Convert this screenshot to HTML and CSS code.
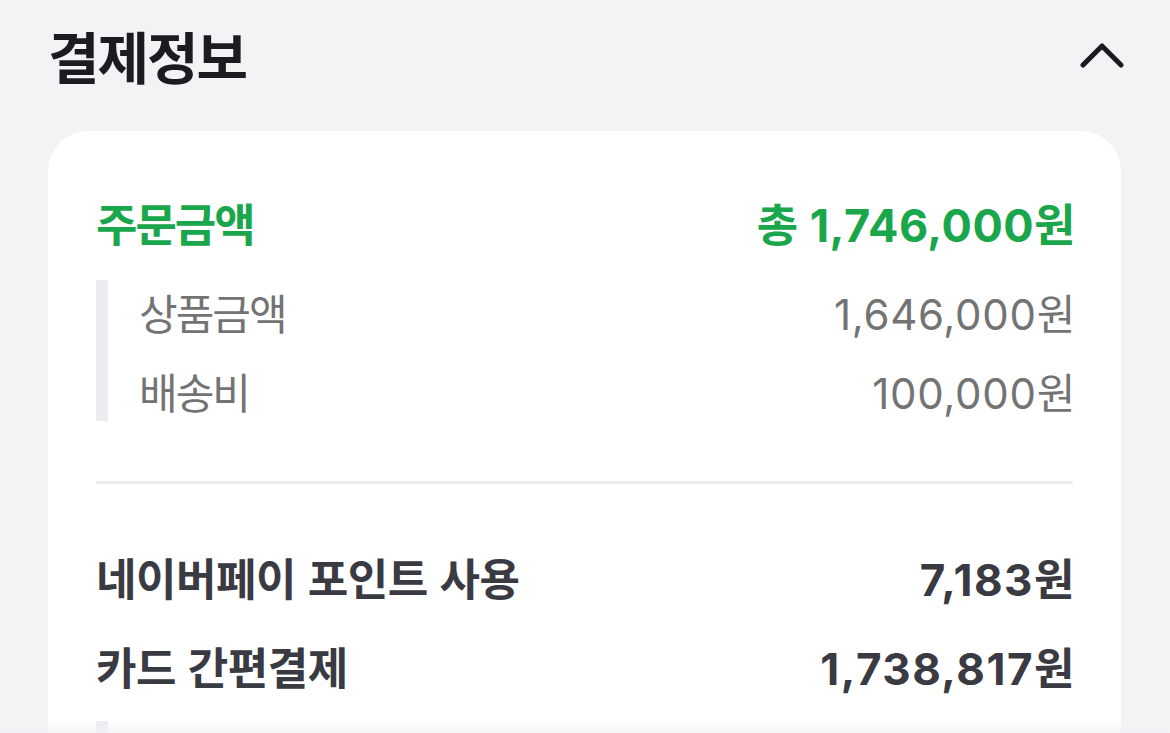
FILE: index.html
```html
<!DOCTYPE html>
<html lang="ko">
<head>
  <meta charset="UTF-8">
  <title>결제정보</title>
  <meta name="viewport" content="width=device-width, initial-scale=1.0">
  <link rel="stylesheet" href="styles.css">
</head>
<body>

  <header class="cabecera">
    <h2>결제정보</h2>
    <button class="plegar" aria-label="접기">
      <svg width="44" height="28" viewBox="0 0 44 28">
        <polyline points="3,24 22,5 41,24" fill="none" stroke="#1c1c20" stroke-width="5" stroke-linecap="round" stroke-linejoin="round"/>
      </svg>
    </button>
  </header>

  <section class="tarjeta">
    <div class="grupo">
      <div class="fila total">
        <span>주문금액</span>
        <span class="monto">총 1,746,000원</span>
      </div>
      <div class="detalle">
        <div class="fila sub">
          <span>상품금액</span>
          <span class="monto">1,646,000원</span>
        </div>
        <div class="fila sub">
          <span>배송비</span>
          <span class="monto">100,000원</span>
        </div>
      </div>
    </div>

    <hr class="linea">

    <div class="grupo pago">
      <div class="fila fuerte">
        <span>네이버페이 포인트 사용</span>
        <span class="monto">7,183원</span>
      </div>
      <div class="fila fuerte">
        <span>카드 간편결제</span>
        <span class="monto">1,738,817원</span>
      </div>
      <div class="detalle siguiente"></div>
    </div>
  </section>

  <div class="desvanecer"></div>

</body>
</html>
```

FILE: styles.css
```css
body {
  margin: 0;
  font-family: Inter, "Noto Sans CJK KR", sans-serif;
  background-color: #f2f3f5;
  color: #1c1c20;
  overflow: hidden;
}
.cabecera {
  display: flex;
  align-items: center;
  justify-content: space-between;
  padding: 18px 46px 0 48px;
  height: 74px;
}
.cabecera h2 {
  margin: 0;
  font-family: "Noto Sans CJK KR", sans-serif;
  font-size: 56px;
  font-weight: 700;
  line-height: 72px;
  letter-spacing: -2px;
}
.plegar {
  background: transparent;
  border: none;
  padding: 0;
  display: flex;
  cursor: pointer;
}
.tarjeta {
  background: #fff;
  margin: 39px 49px 0 48px;
  border-radius: 40px;
  padding: 61px 48px 0 48px;
  height: 700px;
  box-sizing: border-box;
}
.fila {
  display: flex;
  align-items: center;
  justify-content: space-between;
  height: 60px;
}
.fila span:first-child {
  font-family: "Noto Sans CJK KR", sans-serif;
}
.monto {
  margin-right: -3px;
}
.total {
  color: #1aa64b;
  font-size: 45px;
  font-weight: 700;
}
.total span:first-child {
  letter-spacing: -2px;
}
.total .monto {
  letter-spacing: 0.5px;
}
.detalle {
  margin-top: 28px;
  border-left: 12px solid #ebecf0;
  padding-left: 31px;
  display: flex;
  flex-direction: column;
  gap: 17px;
}
.sub {
  height: 62px;
  color: #737373;
  font-size: 42px;
  font-weight: 400;
}
.sub span:first-child {
  letter-spacing: -2px;
}
.sub .monto {
  letter-spacing: 0.7px;
}
.linea {
  border: none;
  height: 3px;
  background: #ececee;
  margin: 60px 0 0 0;
}
.pago {
  margin-top: 63px;
  display: flex;
  flex-direction: column;
  gap: 29px;
}
.fuerte {
  color: #3a3a42;
  font-size: 44px;
  font-weight: 700;
}
.fuerte span:first-child {
  letter-spacing: -0.5px;
}
.fuerte .monto {
  letter-spacing: 1.5px;
}
.siguiente {
  margin-top: -4px;
  height: 60px;
}
.desvanecer {
  position: fixed;
  left: 0;
  right: 0;
  bottom: 0;
  height: 12px;
  background: linear-gradient(rgba(242, 243, 245, 0), rgba(242, 243, 245, 0.8));
}
```
